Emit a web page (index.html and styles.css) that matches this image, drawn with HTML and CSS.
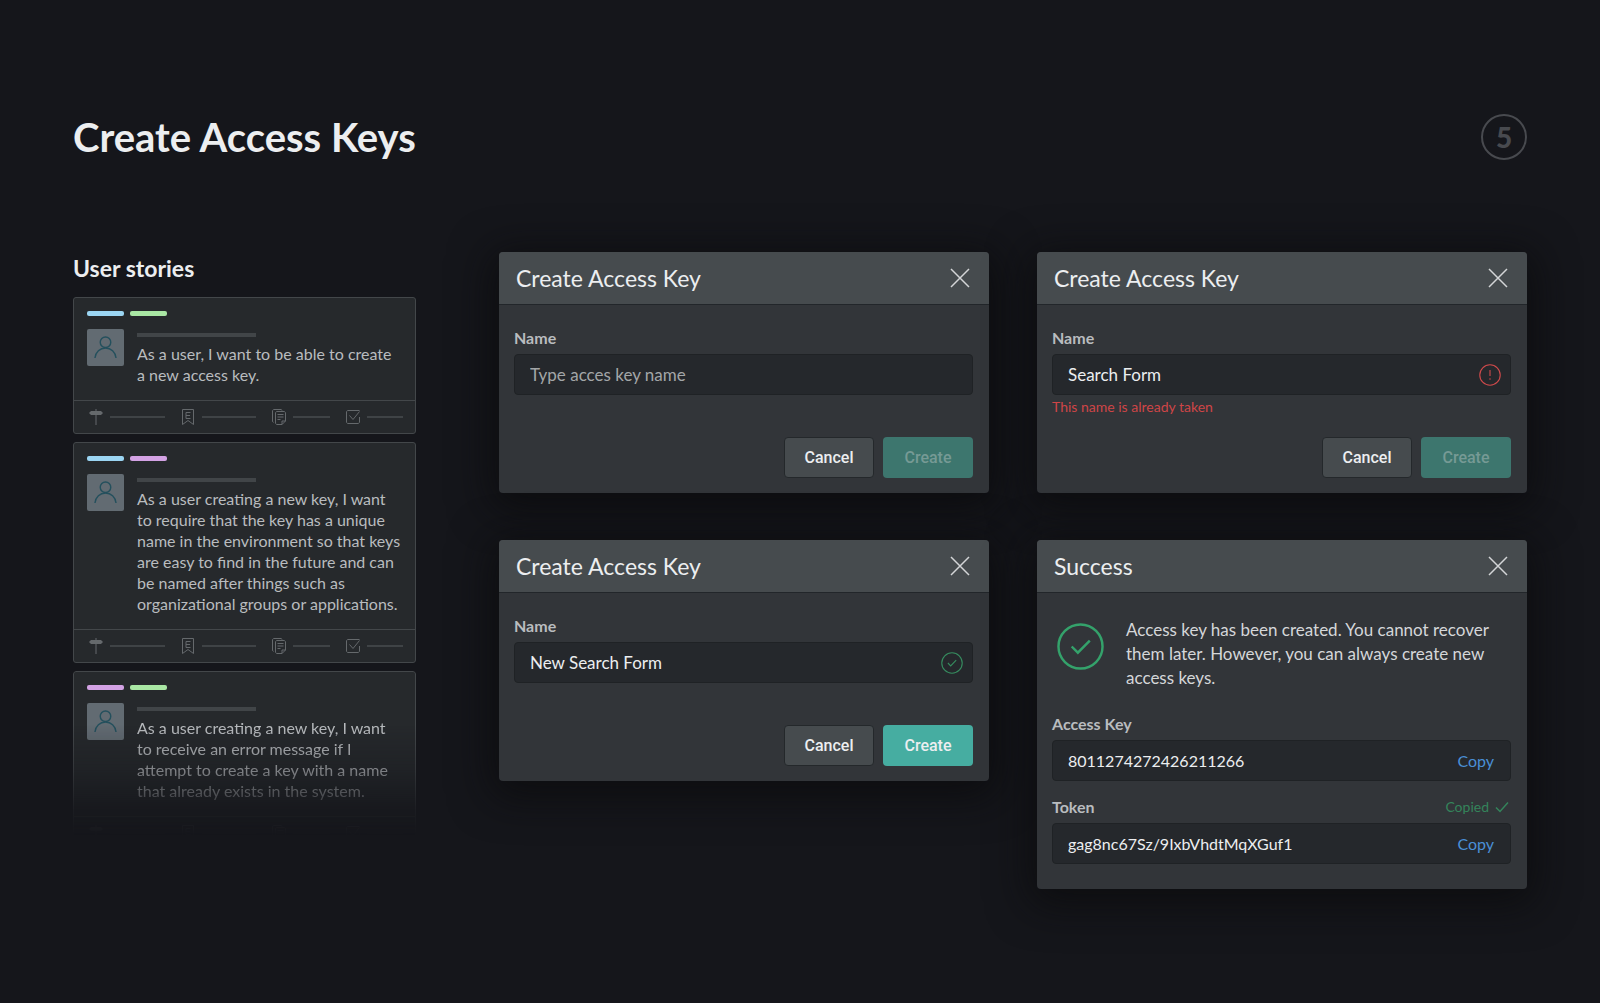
FILE: index.html
```html
<!DOCTYPE html>
<html lang="en">
<head>
<meta charset="utf-8">
<meta name="viewport" content="width=device-width, initial-scale=1">
<title>Create Access Keys</title>
<link rel="stylesheet" href="styles.css">
</head>
<body>
<svg class="sprite" width="0" height="0" aria-hidden="true">
  <symbol id="i-close" viewBox="0 0 20 20"><path d="M1 1 19 19M19 1 1 19"/></symbol>
  <symbol id="i-user" viewBox="0 0 24 24"><circle cx="12" cy="6.5" r="5.5"/><path d="M1 23c.6-6.500 5.300-10.500 11-10.500S22.400 16.500 23 23"/></symbol>
  <symbol id="i-sign" viewBox="0 0 14 16"><path d="M7 0v16"/><path class="solid" d="M2 2h10l2 2-2 2H2L0 4z"/></symbol>
  <symbol id="i-mark" viewBox="0 0 14 16"><path d="M1.500.5h11v15L7 11.500l-5.500 4z"/><path d="M9.500 3.500H5v6h4.500M5 6.500h4"/></symbol>
  <symbol id="i-docs" viewBox="0 0 14 16"><path d="M10 1.500C10 1 9.500.5 9 .5H2C1.200.5.5 1.200.5 2v10c0 .8.500 1.300 1 1.500"/><path d="M5 2.500h7c.8 0 1.500.7 1.500 1.500v8L10 15.500H5c-.8 0-1.500-.7-1.500-1.500V4c0-.8.700-1.500 1.500-1.500zM10 15.500V12h3.500M5.500 5.500h6M5.500 8h6M5.500 10.500h3"/></symbol>
  <symbol id="i-task" viewBox="0 0 14 16"><path d="M13.500 8v5c0 .8-.7 1.500-1.500 1.500H2c-.8 0-1.500-.7-1.500-1.500V3c0-.8.700-1.500 1.500-1.500h11.500M3.500 6.500 7 10.500l6.500-8"/></symbol>
  <symbol id="i-alert" viewBox="0 0 20 20"><circle cx="10" cy="10" r="9.300"/><path d="M10 5.500v5.500M10 13v1.400"/></symbol>
  <symbol id="i-ok" viewBox="0 0 20 20"><circle cx="10" cy="10" r="9.300"/><path d="m6.300 10 2.500 2.600 5-5.200"/></symbol>
  <symbol id="i-done" viewBox="0 0 48 48"><circle cx="24" cy="24" r="22.500"/><path d="m15 24 6.300 6.300L33.500 18"/></symbol>
  <symbol id="i-check" viewBox="0 0 14 12"><path d="m1 6.500 4 4L13 1.500"/></symbol>
</svg>

<main class="page">
  <header class="page-head">
    <h1>Create Access Keys</h1>
    <span class="step">5</span>
  </header>

  <div class="layout">
    <section class="stories">
      <h2>User stories</h2>

      <article class="story">
        <div class="tags"><span class="tag blue"></span><span class="tag green"></span></div>
        <div class="story-main">
          <div class="avatar"><svg><use href="#i-user"/></svg></div>
          <div class="story-text"><span class="author"></span><p>As a user, I want to be able to create<br>a new access key.</p></div>
        </div>
        <footer class="meta">
          <span class="meta-item long"><svg><use href="#i-sign"/></svg></span>
          <span class="meta-item long"><svg><use href="#i-mark"/></svg></span>
          <span class="meta-item"><svg><use href="#i-docs"/></svg></span>
          <span class="meta-item"><svg><use href="#i-task"/></svg></span>
        </footer>
      </article>

      <article class="story">
        <div class="tags"><span class="tag blue"></span><span class="tag purple"></span></div>
        <div class="story-main">
          <div class="avatar"><svg><use href="#i-user"/></svg></div>
          <div class="story-text"><span class="author"></span><p>As a user creating a new key, I want<br>to require that the key has a unique<br>name in the environment so that keys<br>are easy to find in the future and can<br>be named after things such as<br>organizational groups or applications.</p></div>
        </div>
        <footer class="meta">
          <span class="meta-item long"><svg><use href="#i-sign"/></svg></span>
          <span class="meta-item long"><svg><use href="#i-mark"/></svg></span>
          <span class="meta-item"><svg><use href="#i-docs"/></svg></span>
          <span class="meta-item"><svg><use href="#i-task"/></svg></span>
        </footer>
      </article>

      <article class="story fading">
        <div class="tags"><span class="tag purple"></span><span class="tag green"></span></div>
        <div class="story-main">
          <div class="avatar"><svg><use href="#i-user"/></svg></div>
          <div class="story-text"><span class="author"></span><p>As a user creating a new key, I want<br>to receive an error message if I<br>attempt to create a key with a name<br>that already exists in the system.</p></div>
        </div>
        <footer class="meta">
          <span class="meta-item long"><svg><use href="#i-sign"/></svg></span>
          <span class="meta-item long"><svg><use href="#i-mark"/></svg></span>
          <span class="meta-item"><svg><use href="#i-docs"/></svg></span>
          <span class="meta-item"><svg><use href="#i-task"/></svg></span>
        </footer>
      </article>
    </section>

    <div class="dialogs">
      <section class="dialog">
        <header class="dialog-head"><h3>Create Access Key</h3><button class="close" type="button" aria-label="Close"><svg><use href="#i-close"/></svg></button></header>
        <form class="dialog-body">
          <label for="name-empty">Name</label>
          <div class="field name"><input id="name-empty" type="text" placeholder="Type acces key name"></div>
          <div class="hint"></div>
          <div class="actions"><button class="btn" type="button">Cancel</button><button class="btn primary" type="button" disabled>Create</button></div>
        </form>
      </section>

      <section class="dialog">
        <header class="dialog-head"><h3>Create Access Key</h3><button class="close" type="button" aria-label="Close"><svg><use href="#i-close"/></svg></button></header>
        <form class="dialog-body">
          <label for="name-taken">Name</label>
          <div class="field name"><input id="name-taken" type="text" value="Search Form" aria-describedby="taken-hint"><svg class="state error"><use href="#i-alert"/></svg></div>
          <div class="hint" id="taken-hint">This name is already taken</div>
          <div class="actions"><button class="btn" type="button">Cancel</button><button class="btn primary" type="button" disabled>Create</button></div>
        </form>
      </section>

      <section class="dialog">
        <header class="dialog-head"><h3>Create Access Key</h3><button class="close" type="button" aria-label="Close"><svg><use href="#i-close"/></svg></button></header>
        <form class="dialog-body">
          <label for="name-valid">Name</label>
          <div class="field name"><input id="name-valid" type="text" value="New Search Form"><svg class="state ok"><use href="#i-ok"/></svg></div>
          <div class="hint"></div>
          <div class="actions"><button class="btn" type="button">Cancel</button><button class="btn primary" type="button">Create</button></div>
        </form>
      </section>

      <section class="dialog">
        <header class="dialog-head"><h3>Success</h3><button class="close" type="button" aria-label="Close"><svg><use href="#i-close"/></svg></button></header>
        <div class="dialog-body result">
          <div class="message">
            <svg class="done"><use href="#i-done"/></svg>
            <p>Access key has been created. You cannot recover<br>them later. However, you can always create new<br>access keys.</p>
          </div>
          <div class="value">
            <div class="label-row"><label for="key">Access Key</label></div>
            <div class="field"><input id="key" type="text" value="8011274272426211266" readonly><button class="copy" type="button">Copy</button></div>
          </div>
          <div class="value">
            <div class="label-row"><label for="token">Token</label><span class="copied">Copied<svg><use href="#i-check"/></svg></span></div>
            <div class="field"><input id="token" type="text" value="gag8nc67Sz/9IxbVhdtMqXGuf1" readonly><button class="copy" type="button">Copy</button></div>
          </div>
        </div>
      </section>
    </div>
  </div>
</main>
</body>
</html>
```

FILE: styles.css
```css
* { box-sizing: border-box; }

body {
  margin: 0;
  min-height: 100vh;
  background: #15161b;
  color: #eceef0;
  font: 16px/20px Lato, "Open Sans", sans-serif;
}

h1, h2, h3, p { margin: 0; }
button, input { font: inherit; color: inherit; }
button { border: 0; padding: 0; cursor: pointer; }
svg { display: block; fill: none; stroke: currentColor; }
.sprite { position: absolute; }

.page { padding: 114px 73px 64px; }

.page-head {
  display: flex;
  justify-content: space-between;
  align-items: center;
  margin-bottom: 92px;
}
h1 { font-size: 40px; line-height: 46px; font-weight: 700; }
.step {
  width: 46px;
  height: 46px;
  border: 2px solid #484a4f;
  border-radius: 50%;
  color: #484a4f;
  font-size: 28px;
  line-height: 42px;
  font-weight: 900;
  text-align: center;
}

.layout {
  display: grid;
  grid-template-columns: minmax(0, 343fr) minmax(0, 1028fr);
  column-gap: 83px;
  align-items: start;
}

/* User stories */
.stories { display: flex; flex-direction: column; gap: 8px; }
h2 { font-size: 23px; line-height: 32px; font-weight: 700; margin-bottom: 5px; }

.story {
  border: 1px solid #43474a;
  border-radius: 3px;
  background: #26292c;
}
.tags { display: flex; gap: 6px; padding: 13px 13px 0; }
.tag { width: 37px; height: 5px; border-radius: 2px; }
.blue { background: #9bd5f3; }
.green { background: #a9e7a4; }
.purple { background: #d3a2e4; }

.story-main { display: flex; gap: 13px; padding: 13px 12px 15px 13px; }
.avatar {
  flex: none;
  display: grid;
  place-items: center;
  width: 37px;
  height: 37px;
  border-radius: 2px;
  background: #626b72;
  color: #24505d;
}
.avatar svg { width: 23px; height: 23px; stroke-width: 1.500; }
.author { display: block; width: 119px; height: 4px; margin: 4px 0 6px; background: #414548; }
.story-text p { line-height: 21px; color: #b9bcbf; white-space: nowrap; }

.meta {
  display: flex;
  gap: 16px;
  height: 33px;
  padding: 0 12px 0 15px;
  border-top: 1px solid #43474a;
  color: #65696c;
}
.meta-item { flex: 57 1 0; display: flex; align-items: center; gap: 7px; }
.meta-item.long { flex-grow: 75; }
.meta-item::after { content: ""; flex: 1; height: 2px; background: #3f4346; }
.meta svg { width: 14px; height: 16px; }
.solid { fill: currentColor; stroke: none; }

.fading {
  -webkit-mask-image: linear-gradient(#000 30%, rgba(0, 0, 0, .65) 55%, rgba(0, 0, 0, .15) 78%, transparent 92%);
  mask-image: linear-gradient(#000 30%, rgba(0, 0, 0, .65) 55%, rgba(0, 0, 0, .15) 78%, transparent 92%);
}

/* Dialogs */
.dialogs {
  display: grid;
  grid-template-columns: repeat(2, minmax(0, 1fr));
  gap: 47px 48px;
  align-items: start;
}
.dialog {
  border-radius: 4px;
  background: #323539;
  box-shadow: 0 8px 40px 8px rgba(10, 10, 11, .7);
}
.dialog-head {
  display: flex;
  justify-content: space-between;
  align-items: center;
  height: 53px;
  padding: 0 19px 0 17px;
  border-bottom: 1px solid #22262a;
  border-radius: 4px 4px 0 0;
  background: #464b4e;
}
h3 { font-size: 23px; line-height: 28px; font-weight: 400; }
.close { background: none; color: #d3d5d7; }
.close svg { width: 20px; height: 20px; stroke-width: 1.500; }

.dialog-body { padding: 23px 16px 15px 15px; }
.result { padding: 25px 16px 25px 15px; }
label { display: block; margin-bottom: 6px; color: #b9bcbf; font-weight: 700; }
.field {
  display: flex;
  align-items: center;
  height: 41px;
  padding: 0 9px 0 15px;
  border: 1px solid #1f2225;
  border-radius: 4px;
  background: #25282c;
}
.field input {
  flex: 1;
  min-width: 0;
  height: 38px;
  padding: 0;
  border: 0;
  outline: 0;
  background: none;
}
.field.name input { font-size: 17px; }
.field input::placeholder { color: #a3a6a8; opacity: 1; }
.state { flex: none; width: 22px; height: 22px; }
.error { color: #cf4a4b; }
.ok { color: #368c5f; }
.hint { height: 42px; padding-top: 3px; font-size: 14px; line-height: 18px; color: #cf4547; }

.actions { display: flex; justify-content: flex-end; gap: 9px; }
.btn {
  width: 90px;
  height: 41px;
  border: 1px solid #24282b;
  border-radius: 4px;
  background: #464b4e;
  font: 500 16px/20px Roboto, sans-serif;
}
.btn.primary { border: 0; background: #46ada1; }
.btn.primary:disabled { background: #3d766e; color: #769a95; }

.message { display: flex; gap: 22px; padding-left: 5px; margin-bottom: 24px; }
.message p { font-size: 17px; line-height: 24px; color: #d5d7d9; white-space: nowrap; }
.done { flex: none; width: 47px; height: 47px; margin-top: 5px; color: #34a26b; stroke-width: 2.500; }
.value + .value { margin-top: 16px; }
.label-row { display: flex; justify-content: space-between; }
.copied { display: flex; align-items: center; gap: 6px; height: 20px; padding-right: 2px; font-size: 14px; color: #34845b; }
.copied svg { width: 14px; height: 12px; stroke-width: 1.500; }
.copy { margin-right: 7px; background: none; color: #4a8fd6; }
```
